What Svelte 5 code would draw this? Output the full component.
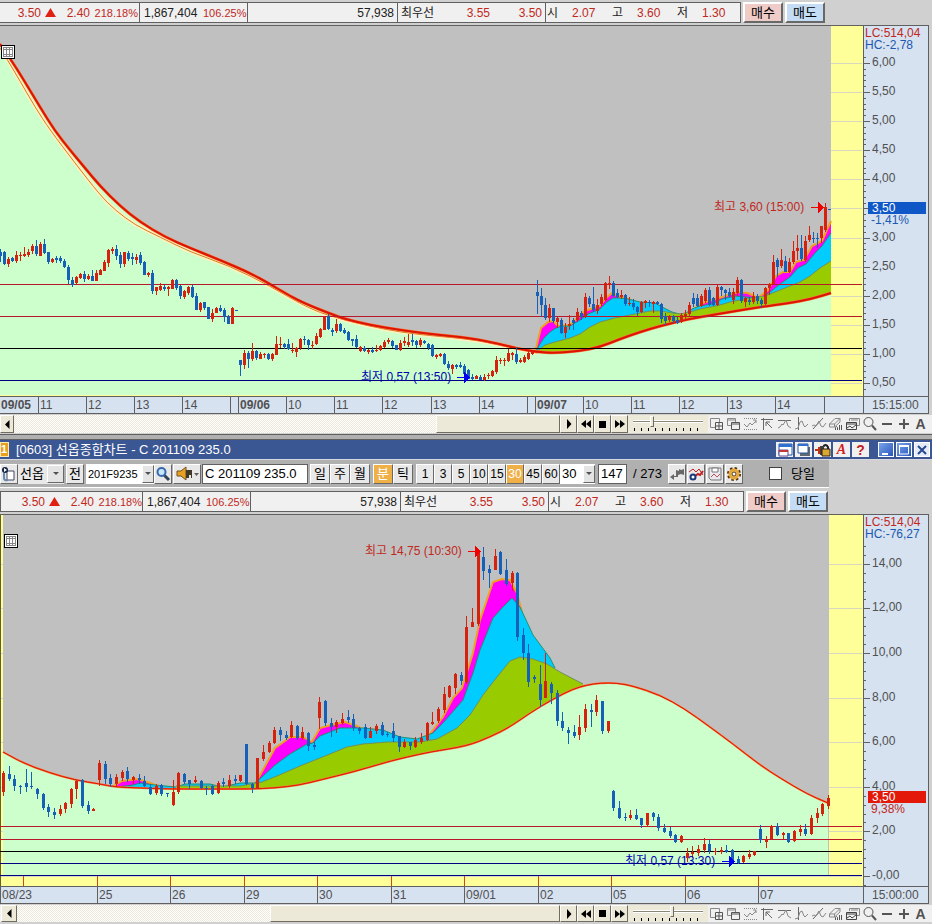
<script>
  // candle = [up, high, body top, body bottom, low], all in plot pixels
  const upperCandles = [
    [0,249,252,256,262],[0,251,252,264,265],[1,257,259,264,267],[0,257,258,261,262],[1,251,255,261,263],
    [1,252,255,256,261],[1,247,254,256,257],[1,249,252,255,257],[1,244,246,251,254],[0,240,246,254,256],
    [1,242,244,256,256],[0,239,244,253,254],[0,252,252,262,264],[1,258,259,262,263],[0,256,258,260,263],
    [0,256,258,261,263],[0,259,261,267,268],[0,265,267,280,284],[0,277,280,285,287],[1,276,277,283,284],
    [1,273,274,278,279],[0,271,274,279,282],[1,274,276,279,280],[0,270,276,281,281],[1,270,273,281,281],
    [1,269,270,275,275],[1,260,262,271,271],[1,249,250,263,267],[1,247,249,251,254],[0,245,249,256,260],
    [0,252,255,264,268],[1,252,252,264,267],[0,251,253,259,261],[0,253,257,259,265],[1,254,257,260,264],
    [0,252,255,263,265],[0,261,262,275,275],[1,272,273,275,277],[0,270,273,291,294],[1,287,287,291,295],
    [1,283,286,290,291],[0,285,287,289,291],[1,286,287,289,296],[1,279,280,289,289],[0,279,280,288,290],
    [0,285,286,296,299],[1,290,291,297,299],[1,286,287,293,295],[0,285,287,297,298],[0,293,296,310,310],
    [1,302,303,310,312],[0,302,302,308,310],[0,307,307,319,319],[1,309,313,319,322],[1,307,308,313,313],
    [0,305,308,311,312],[0,308,310,317,322],[0,315,316,324,324],[1,307,308,324,324],[0,310,310,311,311],
    [0,360,360,365,376],[1,350,353,365,369],[0,351,353,359,368],[1,343,351,359,361],[0,350,351,358,360],
    [1,352,354,359,359],[1,353,354,355,358],[0,353,354,359,360],[1,353,354,359,361],[1,336,344,355,355],
    [1,337,344,345,348],[0,343,344,347,349],[0,339,344,349,350],[1,343,350,351,353],[1,347,348,352,357],
    [1,338,339,348,350],[0,336,339,340,345],[0,339,340,345,350],[1,341,345,346,349],[1,333,336,344,345],
    [1,328,329,337,338],[1,316,317,330,330],[0,314,316,329,330],[0,328,330,332,336],[1,319,324,331,333],
    [0,323,324,331,332],[0,328,330,333,334],[0,331,332,340,341],[0,339,339,341,346],[0,335,339,347,348],
    [1,346,347,351,352],[0,346,348,351,352],[1,349,350,352,354],[0,347,350,352,353],[1,345,350,351,352],
    [1,345,346,350,351],[1,340,342,347,348],[1,338,340,342,344],[0,340,341,346,348],[0,345,345,350,350],
    [1,340,343,350,351],[1,337,341,343,346],[1,334,342,345,347],[0,334,340,342,346],[0,340,341,345,348],
    [1,338,340,345,347],[0,340,341,343,344],[0,343,344,348,350],[0,344,345,356,357],[1,354,355,357,359],
    [1,353,354,356,357],[0,353,354,364,365],[0,361,364,368,370],[1,364,365,369,374],[0,364,365,367,369],
    [0,362,365,367,368],[0,364,366,374,375],[0,369,370,379,379],[0,374,377,379,380],[1,375,376,379,379],
    [0,375,377,380,380],[1,374,377,380,381],[1,373,375,376,379],[1,370,371,376,377],[1,356,360,372,374],
    [1,358,360,361,364],[1,358,360,361,366],[1,349,353,361,362],[1,352,353,355,360],[0,347,354,362,364],
    [1,358,360,362,363],[1,355,357,362,363],[1,350,353,359,360],[1,350,352,354,355],[0,280,292,296,314],
    [0,288,296,305,317],[0,298,305,318,320],[1,304,308,318,322],[0,308,308,321,323],[1,317,318,322,328],
    [0,318,320,333,334],[1,323,327,333,338],[1,315,324,326,330],[0,318,320,323,330],[1,308,312,320,322],
    [0,311,313,317,320],[1,293,297,316,318],[0,296,298,304,307],[0,287,304,310,312],[1,299,305,311,314],
    [1,294,297,304,306],[1,282,283,300,301],[1,276,283,285,289],[0,281,283,296,297],[0,289,293,297,298],
    [1,290,295,297,299],[0,294,295,304,306],[1,297,303,304,306],[0,299,303,307,310],[0,306,307,312,316],
    [1,301,302,312,313],[1,300,301,303,308],[0,300,302,303,307],[1,301,302,304,313],[0,301,302,304,305],
    [0,303,304,319,323],[0,313,316,321,325],[1,315,317,320,322],[0,315,316,321,323],[0,317,320,323,324],
    [1,313,315,322,323],[1,310,314,317,319],[1,302,305,314,316],[0,293,298,304,307],[0,294,298,306,307],
    [1,294,296,306,307],[1,288,290,301,303],[0,287,290,305,306],[0,297,298,305,306],[1,285,287,305,306],
    [0,286,287,290,296],[0,289,290,293,300],[0,288,292,296,297],[1,288,292,300,304],[1,277,280,293,296],
    [0,279,280,301,303],[1,297,298,302,307],[0,297,300,302,305],[1,292,296,302,304],[0,294,296,301,304],
    [0,298,300,304,308],[1,287,288,304,305],[1,283,284,288,295],[1,255,262,284,285],[0,258,260,267,277],
    [1,249,260,266,268],[0,256,261,272,272],[1,258,262,272,273],[1,241,251,262,264],[1,235,248,251,260],
    [0,235,248,259,261],[1,236,241,260,262],[1,226,235,240,242],[0,232,238,239,243],[0,233,238,239,248],
    [1,226,226,238,243],[1,203,207,230,232],[0,209,209,210,210],
  ];
  const lowerCandles = [
    [1,771,773,792,796],[0,766,774,779,781],[0,775,779,786,791],[0,785,786,787,794],[0,769,783,787,792],
    [0,772,786,787,789],[0,788,789,794,799],[0,793,794,808,810],[0,804,807,812,817],[0,808,812,815,819],
    [1,805,809,814,816],[1,802,803,809,813],[1,788,789,804,808],[1,780,781,789,799],[0,779,780,806,808],
    [0,801,805,811,814],[1,808,809,811,811],[1,760,763,780,786],[0,761,764,779,784],[0,774,778,784,787],
    [1,774,777,784,787],[1,770,772,778,781],[0,767,771,779,782],[1,776,777,780,784],[0,774,778,780,784],
    [0,776,781,786,787],[0,784,787,794,795],[1,784,786,793,795],[0,784,785,794,796],[0,793,793,794,797],
    [1,780,792,805,806],[1,772,773,792,794],[0,773,774,782,784],[0,780,780,784,789],[1,776,780,782,783],
    [0,780,781,788,789],[0,786,788,789,795],[0,785,786,794,795],[1,781,783,793,794],[0,778,782,784,787],
    [1,775,780,786,788],[0,775,779,781,784],[1,775,775,781,782],[0,744,744,784,785],[0,783,784,788,793],
    [1,758,758,788,789],[1,745,752,759,761],[1,741,743,752,753],[1,727,730,743,744],[0,727,730,735,741],
    [0,731,735,738,740],[1,721,725,737,738],[0,725,726,738,740],[1,727,732,738,740],[0,732,733,746,751],
    [0,742,745,747,750],[1,697,702,718,729],[0,700,701,723,726],[0,718,723,727,737],[1,720,722,727,733],
    [1,713,719,723,725],[0,710,717,720,723],[0,714,719,728,731],[0,727,728,731,734],[0,724,727,738,739],
    [1,727,731,738,738],[1,724,726,731,734],[0,722,725,735,736],[0,732,734,735,737],[0,723,731,738,742],
    [0,736,736,747,752],[1,739,742,747,748],[0,742,742,746,750],[1,737,740,747,748],[1,733,738,742,744],
    [1,722,723,740,741],[1,712,722,724,725],[1,707,709,721,723],[1,687,694,710,713],[1,685,686,697,698],
    [1,673,674,688,694],[0,672,675,681,685],[1,616,627,682,684],[1,608,622,627,627],[1,550,552,624,626],
    [0,547,557,571,580],[0,565,569,573,588],[1,549,556,570,570],[0,551,552,574,575],[0,559,570,584,586],
    [1,571,573,583,591],[0,572,573,637,641],[0,628,635,653,660],[0,644,653,682,687],[0,675,677,679,683],
    [0,665,684,700,707],[1,653,681,698,698],[0,682,684,693,704],[0,690,693,721,726],[0,712,721,728,731],
    [0,727,730,733,744],[0,725,732,736,738],[1,715,727,735,740],[1,704,709,728,732],[0,704,710,712,727],
    [1,695,700,712,716],[0,701,701,731,734],[1,721,721,731,733],[0,790,791,808,811],[0,801,808,818,819],
    [0,813,817,818,821],[1,810,815,818,820],[0,809,815,819,820],[0,818,818,825,828],[1,813,813,825,827],
    [0,812,813,817,821],[0,814,817,828,831],[0,824,828,832,833],[0,827,831,836,838],[0,834,835,842,843],
    [1,835,836,842,843],[1,848,853,858,862],[1,846,852,854,858],[1,845,849,853,856],[1,838,844,850,853],
    [0,840,844,851,854],[1,848,851,852,855],[1,847,850,852,854],[0,845,850,852,853],[0,849,850,861,863],
    [0,856,859,863,864],[1,855,856,862,863],[1,850,854,857,859],[1,851,851,855,856],[0,825,829,840,843],
    [1,836,840,842,848],[1,825,826,839,840],[0,823,826,835,836],[1,832,833,835,839],[0,833,833,842,843],
    [1,830,831,841,842],[1,825,829,832,836],[0,824,829,834,836],[1,815,818,834,835],[1,808,813,818,823],
    [1,803,804,814,816],[1,795,798,806,809],
  ];

  const range = (n) => Array.from({ length: n }, (_, i) => i);

  const panels = [
    {
      id: "upper",
      top: 26,
      height: 370,
      left: 0,
      floor: 395,
      candles: upperCandles,
      candleX: (i) => (i < 134 ? i * 4 : i * 4 + 1),
      slow: "0,44 10,58 25,82 40,107 55,131 70,150 85,168 100,186 120,206 140,222 165,237 190,248 220,260 250,273 270,284 290,296 306,304 331,314 345,319 370,325 400,330 430,334 470,338 500,344 515,348 537,352 555,353 580,351 600,347 620,339 640,332 660,326 685,320 700,317 730,312 760,307 790,303 811,299 831,293",
      slowWidth: 2,
      slowShadow: "0,48 7,59 20,81 35,107 50,130 75,163 100,195 115,210 135,225 160,237 190,252 230,266 270,286 306,307 335,318 400,333 470,339 500,345 537,353",
      magenta: "535,353 538,340 541,328 548,322 553,321 558,326 570,325 585,311 600,306 606,298 612,293 618,296 628,299 640,304 655,306 664,311 683,318 692,311 700,304 712,300 722,297 738,292 748,293 758,298 768,290 776,276 783,272 790,272 796,262 804,260 812,246 822,241 826,232 831,221",
      cyan: "535,353 540,344 544,338 550,332 556,328 562,326 570,326 580,320 588,314 600,309 607,302 613,298 620,298 628,299 640,302 655,303 664,308 672,312 683,315 692,309 700,306 712,304 722,299 735,296 745,297 762,298 770,292 780,284 790,277 798,268 806,264 815,253 822,246 831,233",
      olive: "535,353 545,345 555,342 570,338 580,334 590,327 600,322 615,318 630,315 650,311 662,311 672,313 680,314 690,312 700,309 720,305 730,302 745,299 765,296 775,292 790,286 800,282 810,276 820,268 831,261",
      cloudFrom: 535,
      plotTo: 831,
      lines: [[284, "#b8182c"], [316, "#b8182c"], [348, "#000"], [380, "#000080"]],
      lc: "LC:514,04",
      hc: "HC:-2,78",
      majors: ["0,50", "1,00", "1,50", "2,00", "2,50", "3,00", "", "4,00", "4,50", "5,00", "5,50", "6,00"].map((text, i) => ({ y: Math.round(383 - i * 29.1), text })),
      minorStep: 5.82,
      tag: { y: 208, text: "3,50", sub: "-1,41%", tone: "on-blue" },
      high: { x: 714, y: 207, text: "최고 3,60 (15:00)", tip: 822 },
      low: { x: 361, y: 377, text: "최저 0,57 (13:50)", tip: 468 },
      dayTicks: [],
      times: [
        [-1, "09/05", true], [38, "11"], [86, "12"], [134, "13"], [182, "14"], [230, ""], [238, "09/06", true],
        [286, "10"], [334, "11"], [382, "12"], [431, "13"], [479, "14"], [527, ""], [535, "09/07", true],
        [583, "10"], [631, "11"], [679, "12"], [727, "13"], [775, "14"], [824, ""],
      ],
      clock: "15:15:00",
      thumb: 77.3,
      zoom: 26,
    },
    {
      id: "lower",
      top: 515,
      height: 371,
      left: 3,
      floor: 876,
      candles: lowerCandles,
      candleX: (i) => Math.round(3 + i * 5.65),
      slow: "3,752 20,762 50,773 75,780 100,784 115,787 140,788 170,789 220,789 250,789 275,788 300,785 320,780 353,772 387,762 407,757 430,752 467,746 490,737 510,727 530,713 553,699 573,689 587,685 600,683 617,683 633,686 660,695 685,709 710,727 733,744 760,765 780,778 807,794 828,803",
      slowWidth: 1,
      slowShadow: "",
      magenta: "112,787 122,781 138,779 150,783 160,787 176,789 250,788 255,784 264,768 275,748 285,741 290,737 303,737 312,742 320,728 335,724 345,722 357,726 365,731 400,741 417,741 430,734 443,717 453,698 462,688 473,653 480,620 493,582 502,579 510,580 517,593 522,612",
      cyan: "118,787 133,785 140,783 155,785 176,787 185,784 210,784 222,787 240,783 255,783 262,777 275,765 290,754 307,744 313,743 320,736 340,728 363,728 383,730 400,737 417,739 433,733 443,723 463,700 473,673 480,650 493,618 502,608 512,598 520,607 533,635 550,658 555,668",
      olive: "176,786 200,786 240,786 262,782 277,776 300,766 320,758 347,747 363,744 387,742 420,742 437,739 457,728 470,715 483,695 497,677 510,661 520,657 533,659 547,664 560,672 583,684",
      cloudFrom: 112,
      plotTo: 829,
      lines: [[826, "#b8182c"], [839, "#b8182c"], [851, "#000"], [863, "#000080"], [875, "#000080"]],
      lc: "LC:514,04",
      hc: "HC:-76,27",
      majors: ["-0,00", "2,00", "4,00", "6,00", "8,00", "10,00", "12,00", "14,00"].map((text, i) => ({ y: Math.round(876 - i * 44.6), text })),
      minorStep: 8.92,
      tag: { y: 797, text: "3,50", sub: "9,38%", tone: "on-red" },
      high: { x: 365, y: 551, text: "최고 14,75 (10:30)", tip: 479 },
      low: { x: 625, y: 861, text: "최저 0,57 (13:30)", tip: 733 },
      dayTicks: [23, 97, 170, 244, 317, 391, 464, 538, 611, 685, 758],
      times: [
        [0, "08/23"], [97, "25"], [170, "26"], [244, "29"], [317, "30"], [391, "31"], [464, "09/01"],
        [538, "02"], [611, "05"], [685, "06"], [758, "07"],
      ],
      clock: "15:00:00",
      thumb: 46.6,
      zoom: 56,
    },
  ];

  const plotWidth = 863;
  const area = (points, p) => {
    const first = points.split(" ")[0].split(",")[0];
    const last = points.split(" ").at(-1).split(",")[0];
    return `${points} ${last},${p.floor} ${first},${p.floor}`;
  };
  // runs through the midpoints so that the slow average has no corners
  const smooth = (points) => {
    const pts = points.split(" ").map((s) => s.split(",").map(Number));
    let d = `M${pts[0]}`;
    for (let i = 1; i < pts.length - 1; i++) {
      const [x, y] = pts[i];
      const [nx, ny] = pts[i + 1];
      d += ` Q${x},${y} ${(x + nx) / 2},${(y + ny) / 2}`;
    }
    return `${d} L${pts.at(-1)}`;
  };

  const minutes = [1, 3, 5, 10, 15, 30, 45, 60];
  let unit = $state("분");
  let minute = $state(30);
</script>

{#snippet ticker()}
  <div class="ticker">
    <div class="quote">
      <div class="cell price">
        <span class="red">3.50</span>
        <svg width="11" height="9" viewBox="0 0 11 9"><path d="M5.5 0 11 9H0z" fill="#e02010" /></svg>
        <span class="red">2.40</span>
        <span class="red rate">218.18%</span>
      </div>
      <div class="cell volume"><span>1,867,404</span><span class="red rate">106.25%</span></div>
      <div class="cell amount">57,938</div>
      <div class="cell best"><span>최우선</span><span class="red">3.55</span><span class="red">3.50</span></div>
      <div class="cell ohl">
        <span>시</span><span class="red">2.07</span>
        <span>고</span><span class="red">3.60</span>
        <span>저</span><span class="red">1.30</span>
      </div>
    </div>
    <button class="trade buy">매수</button>
    <button class="trade sell">매도</button>
  </div>
{/snippet}

{#snippet chart(p)}
  <div class="chart">
    <div class="plot">
      <svg class="canvas" height={p.height} viewBox="0 {p.top} {plotWidth} {p.height}" preserveAspectRatio="none">
        <rect x="0" y={p.top} width={plotWidth} height={p.height} fill="#ffff99" />
        {#each p.majors as m}
          <rect x="0" y={m.y} width="862" height="1" fill="#d8d8c0" />
        {/each}
        <rect x={p.left} y={p.top} width={p.plotTo - p.left} height={p.floor - p.top} fill="#c0c0c0" />
        {#if p.left}
          <rect x="0" y={p.top} width="1" height={p.height} fill="#606030" />
        {/if}
        <polygon points={area(p.magenta, p)} fill="#ff00ff" />
        <polyline points={p.magenta} fill="none" stroke="#f0a020" stroke-width="2" />
        <polygon points={area(p.cyan, p)} fill="#00ccff" />
        <polyline points={p.cyan} fill="none" stroke="#209070" />
        <polygon points={area(p.olive, p)} fill="#99cc00" />
        <polyline points={p.olive} fill="none" stroke="#6f8f5f" />
        <path d="{smooth(p.slow)} V{p.floor} H{p.left} Z" fill="#ccffcc" />
        {#if p.slowShadow}
          <path d={smooth(p.slowShadow)} fill="none" stroke="#fff0c0" stroke-width="4" />
          <path d={smooth(p.slowShadow)} fill="none" stroke="#d08020" />
        {/if}
        <path d={smooth(p.slow)} fill="none" stroke="#f87838" stroke-width={p.slowWidth + 1} />
        <path d={smooth(p.slow)} fill="none" stroke="#dc1404" stroke-width={p.slowWidth} />
        <g shape-rendering="crispEdges">
          {#each p.lines as [y, color]}
            <rect x="0" {y} width="862" height="1" fill={color} />
          {/each}
          {#each p.dayTicks as x}
            <rect {x} y="876" width="1" height="10" fill="#c84820" />
          {/each}
          {#each p.candles as [up, hi, top, bottom, lo], i}
            {@const x = p.candleX(i)}
            <g fill={up ? "#d4220e" : "#1660b8"}>
              <rect {x} y={hi} width="1" height={lo - hi} />
              <rect x={x - 1} y={top} width="3" height={bottom - top || 1} />
            </g>
          {/each}
          {#each [[p.high, "#f00000"], [p.low, "#0000f0"]] as [m, color]}
            <rect x={m.tip - 11} y={m.y} width="8" height="1" fill={color} />
            <path d="M{m.tip - 4} {m.y - 5}l6 5.5l-6 5.5z" fill={color} />
          {/each}
        </g>
      </svg>
      <span class="mark red" style="left: {(p.high.x / plotWidth) * 100}%; top: {p.high.y - p.top - 8}px">{p.high.text}</span>
      <span class="mark navy" style="left: {(p.low.x / plotWidth) * 100}%; top: {p.low.y - p.top - 8}px">{p.low.text}</span>
      <button class="table-toggle" class:inset={p.left > 0} aria-label="표">
        <svg width="10" height="10" viewBox="0 0 10 10" shape-rendering="crispEdges">
          <path d="M0 .5h10M0 2.5h10M0 7.5h10M0 9.5h10M.5 0v10M3.5 0v10M6.5 0v10M9.5 0v10" stroke="#888" fill="none" />
        </svg>
      </button>
    </div>
    <div class="axis">
      <svg width="64" height={p.height} viewBox="0 {p.top} 64 {p.height}" shape-rendering="crispEdges">
        {#each range(64) as i}
          {@const y = Math.round(p.majors[0].y + p.minorStep - i * p.minorStep)}
          {#if y > p.top + 28 && y < p.top + p.height}
            <rect x="0" {y} width="2" height="1" fill="#606060" />
          {/if}
        {/each}
        {#each p.majors as m}
          <rect x="0" y={m.y} width="6" height="1" fill="#606060" />
        {/each}
      </svg>
      <div class="change"><span class="red">{p.lc}</span><span class="blue">{p.hc}</span></div>
      {#each p.majors as m}
        <span class="level" style="top: {m.y - p.top - 7}px">{m.text}</span>
      {/each}
      <div class="tag {p.tag.tone}" style="top: {p.tag.y - p.top - 6}px"><b>{p.tag.text}</b><span>{p.tag.sub}</span></div>
    </div>
  </div>
  <div class="timeline">
    <div class="times">
      {#each p.times as [x, text, strong]}
        <span class:strong style="left: {(x / plotWidth) * 100}%">{text}</span>
      {/each}
    </div>
    <div class="clock">{p.clock}</div>
  </div>
{/snippet}

{#snippet scroller(p)}
  <div class="scroller" class:inset={p.left > 0}>
    <button class="face step" aria-label="이전"><svg width="6" height="9" viewBox="0 0 6 9"><path d="M5.5 0v9L1 4.5z" /></svg></button>
    <div class="track"><div class="thumb" style="margin-left: {p.thumb}%"></div></div>
    <button class="face" aria-label="다음"><svg width="6" height="10" viewBox="0 0 6 10"><path d="M1 0v10l4.5-5z" /></svg></button>
    <button class="face" aria-label="되감기"><svg width="10" height="8" viewBox="0 0 10 8"><path d="M5 0v8L0 4zM10 0v8L5 4z" /></svg></button>
    <button class="face" aria-label="정지"><svg width="7" height="7" viewBox="0 0 7 7"><path d="M0 0h7v7H0z" /></svg></button>
    <button class="face" aria-label="빨리 감기"><svg width="10" height="8" viewBox="0 0 10 8"><path d="M0 0v8l5-4zM5 0v8l5-4z" /></svg></button>
    <label class="slider">
      <input type="range" min="0" max="100" value={p.zoom} aria-label="봉 간격" />
      <svg width="72" height="3" viewBox="0 0 72 3" shape-rendering="crispEdges">
        {#each range(10) as i}<rect x={2 + i * 7} y="0" width="1" height="3" />{/each}
      </svg>
    </label>
    <div class="tools">
      <button aria-label="추가"><svg viewBox="0 0 16 16"><path d="M6 11.5H1.5v-9h9V6" /><path d="M6.5 6.5h7v7h-7zM10 7v6M7 10h6" stroke="#555" /></svg></button>
      <button aria-label="겹치기"><svg viewBox="0 0 16 16"><path d="M5 9.500H1.500v-7h8V6M1 4h9" /><path d="M5.500 6.500h8v7h-8zM5 8h9" stroke="#555" /></svg></button>
      <button aria-label="영역"><svg viewBox="0 0 16 16"><path d="M1 2.5h13M1 13.5h13" stroke-dasharray="1 1" /><path d="M1 8l3 3 3-4 2 2 4-4M10 4h3v3" /></svg></button>
      <button aria-label="전환점"><svg viewBox="0 0 16 16"><path d="M3.5 2v12M1 3.5h12M6 6l6 6M6 6h4M6 6v4" stroke="#666" /></svg></button>
      <button aria-label="수평선"><svg viewBox="0 0 16 16"><path d="M1 4.500h13" stroke="#666" /><path d="M1 12l2-1 2-3 1 1 3-5 2 6 3 2" /></svg></button>
      <button aria-label="수직선"><svg viewBox="0 0 16 16"><path d="M4.500 1v13" stroke="#666" /><path d="M1 13l3-1 2-6 2-1 2 5 1 1 3-3" /></svg></button>
      <button aria-label="추세선"><svg viewBox="0 0 16 16"><path d="M2 13 12 2" stroke="#666" /><path d="M1 10l2-1 2 1 3-5 2 5 2 1 3-4" /></svg></button>
      <button aria-label="모두 지우기"><svg viewBox="0 0 16 16"><path d="M1.5 8 7 2.5h5L6.500 8zM1.500 8v3h5V8M6.500 11 12 6V2.500" /><path d="M7.500 14V11.500l1-1 1 1V14M11.500 9v5M13.500 9v5" stroke="#555" /></svg></button>
      <button aria-label="차트 복사"><svg viewBox="0 0 16 16"><path d="M4.5 5V2.5h10v7H12M6 4h7" /><path d="M1.500 6.500h10v7h-10zM1 8h10M2 12l3-2 2 2 4-3" stroke="#444" /></svg></button>
      <button aria-label="돋보기"><svg viewBox="0 0 16 16"><circle cx="6.5" cy="6" r="4.5" stroke="#555" /><path d="M10 9.5 14 14" stroke="#555" stroke-width="2" /></svg></button>
      <button aria-label="축소"><svg viewBox="0 0 16 16"><path d="M3 8h10" stroke="#555" stroke-width="2" /></svg></button>
      <button aria-label="확대"><svg viewBox="0 0 16 16"><path d="M3 8h10M8 3v10" stroke="#555" stroke-width="2" /></svg></button>
      <button class="letter">A</button>
    </div>
  </div>
{/snippet}

<section class="window">
  {@render ticker()}
  {@render chart(panels[0])}
  {@render scroller(panels[0])}
</section>

<header class="title">
  <span class="badge">1</span>
  <h1>[0603] 선옵종합차트 - C 201109 235.0</h1>
  <div class="window-tools">
    <button aria-label="창 설정"><svg viewBox="0 0 16 14"><path d="M2 1h13v11H2z" fill="#fff" stroke="#2858a0" /><path d="M2 1h13v3H2z" fill="#3070d0" /><path d="M2 7h9v6H2z" fill="#fff" stroke="#604898" /><path d="M2 7h9v2H2z" fill="#c03838" /></svg></button>
    <button aria-label="창 복사"><svg viewBox="0 0 16 14"><path d="M4 4h10v9H4z" fill="#606870" /><path d="M2 1h10v9H2z" fill="#fff" stroke="#2858a0" /><path d="M2 1h10v2H2z" fill="#3070d0" /></svg></button>
    <button aria-label="잠금"><svg viewBox="0 0 16 14"><path d="M0 7h6M4 4v7" stroke="#c03010" stroke-width="2" /><path d="M8 7V4q2.5-4 5 0v3" fill="none" stroke="#222" stroke-width="2" /><path d="M5 3h4v9H5z" fill="#404040" /><path d="M7 6h8v7H7z" fill="#d8a830" stroke="#302010" /></svg></button>
    <button class="font">A</button>
    <button class="help">?</button>
  </div>
  <div class="window-controls">
    <button aria-label="최소화"><svg viewBox="0 0 14 14"><path d="M3 11h6" stroke="#fff" stroke-width="2" /></svg></button>
    <button aria-label="최대화"><svg viewBox="0 0 14 14"><path d="M2.500 3h9v8h-9z" fill="none" stroke="#fff" /><path d="M2 3h10" stroke="#fff" stroke-width="2" /></svg></button>
    <button class="light" aria-label="닫기"><svg viewBox="0 0 14 14"><path d="m3 3 8 8M11 3l-8 8" stroke="#284890" stroke-width="2" /></svg></button>
  </div>
</header>

<div class="toolbar">
  <div class="controls">
    <button class="key icon" aria-label="화면"><svg viewBox="0 0 16 16"><path d="M6 5h7v9H6z" fill="#fff" stroke="#446" /><path d="M3 7v5q0 3 4 2" fill="none" stroke="#68a" stroke-width="2" /><circle cx="4" cy="4" r="3" fill="#124" /><path d="m3 2 3 2-3 2z" fill="#fff" /></svg></button>
    <div class="combo market">
      <select aria-label="시장"><option>선옵</option></select><i></i>
    </div>
    <button class="key prev">전</button>
    <div class="combo code">
      <select aria-label="종목코드"><option>201F9235</option></select><i></i>
    </div>
    <button class="key icon" aria-label="종목 검색"><svg viewBox="0 0 16 16"><path d="m9 9 5 5" stroke="#345" stroke-width="3" /><circle cx="6.5" cy="6" r="4" fill="#c8e8f8" stroke="#3868b0" stroke-width="2" /></svg></button>
    <button class="key sound" aria-label="소리"><svg viewBox="0 0 24 16"><path d="M2 5h4l5-4v13L6 10H2z" fill="#e8a020" stroke="#705020" /><path d="M11 4h6v8h-1V9h-2v3h-3z" fill="#403828" /><path d="M19 7h5l-2.500 3z" fill="#606060" /></svg></button>
    <input class="name" aria-label="종목명" value="C 201109 235.0" />
    <div class="keys">
      {#each ["일", "주", "월"] as name}
        <button class="key" class:on={unit === name} onclick={() => (unit = name)}>{name}</button>
      {/each}
    </div>
    <div class="keys">
      {#each ["분", "틱"] as name}
        <button class="key" class:on={unit === name} onclick={() => (unit = name)}>{name}</button>
      {/each}
    </div>
    <div class="keys minutes">
      {#each minutes as m}
        <button class="key" class:on={minute === m} onclick={() => (minute = m)}>{m}</button>
      {/each}
      <div class="combo minute">
        <select aria-label="분"><option>30</option></select><i></i>
      </div>
    </div>
    <label class="count"><input aria-label="봉 개수" value="147" /> <span>/ 273</span></label>
    <div class="keys icons">
      <button class="key icon" aria-label="되돌리기"><svg viewBox="0 0 16 16"><path d="M1 11l4-3v2h2V4l3 1V3l2 1 3-1v6l-3-1-3 1v2H5v3z" fill="#686868" /></svg></button>
      <button class="key icon" aria-label="지표 설정"><svg viewBox="0 0 16 16"><path d="m1 6 4-3 3 3 3-3 4 6" fill="none" stroke="#c02020" /><path d="m7 10 3-2 2 1 3-4" fill="none" stroke="#c02020" stroke-width="2" /><circle cx="5" cy="11" r="2.5" fill="#fff" stroke="#183878" stroke-width="2" /></svg></button>
      <button class="key icon" aria-label="저장"><svg viewBox="0 0 16 16"><path d="M2 2h12v12H4l-2-2z" fill="#e8e8f0" stroke="#777" /><path d="M5 2h6v4H5z" fill="#fff" stroke="#777" /><path d="m4 11 3-3 3 3 3-3" fill="none" stroke="#c05050" /></svg></button>
      <button class="key icon" aria-label="환경 설정"><svg viewBox="0 0 16 16"><circle cx="8" cy="8" r="5.5" fill="none" stroke="#503008" stroke-width="3" stroke-dasharray="2.3 2" /><circle cx="8" cy="8" r="4" fill="#fff" stroke="#e8a838" stroke-width="3" /><circle cx="8" cy="8" r="2" fill="#fff" stroke="#503008" /></svg></button>
    </div>
    <label class="today"><input type="checkbox" /><span>당일</span></label>
  </div>
</div>

<section class="window second">
  {@render ticker()}
  {@render chart(panels[1])}
  {@render scroller(panels[1])}
</section>

<style>
  :global(body) {
    margin: 0;
    background: #d0d0d0;
    font-family: "Liberation Sans", "Noto Sans CJK KR", sans-serif;
    font-size: 12px;
    line-height: 16px;
    color: #202020;
  }
  button,
  input,
  select {
    font: inherit;
    color: inherit;
    margin: 0;
    padding: 0;
    border: 0;
    border-radius: 0;
    box-sizing: border-box;
  }
  button {
    display: flex;
    align-items: center;
    justify-content: center;
    white-space: nowrap;
  }
  button svg {
    flex: none;
  }
  span {
    white-space: nowrap;
  }
  .red {
    color: #c0281c;
  }
  .blue {
    color: #1c58b0;
  }
  .navy {
    color: #0000b0;
  }

  .window {
    padding: 2px 3px 2px 0;
    overflow: hidden;
  }
  .window.second {
    padding-top: 3px;
  }

  /* quote line */
  .ticker {
    display: flex;
    gap: 2px;
    height: 21px;
    margin-bottom: 2px;
  }
  .quote {
    display: flex;
    border: 1px solid #606060;
    border-left: 0;
    background: #f0f0f0;
  }
  .second .quote {
    border-left: 1px solid #606060;
  }
  .cell {
    display: grid;
    align-items: center;
    box-sizing: border-box;
    border-right: 1px solid #606060;
  }
  .price {
    width: 140px;
    grid-template-columns: 41px 15px 34px 48px;
    justify-items: end;
  }
  .second .price {
    width: 142px;
    padding-left: 3px;
  }
  .rate {
    font-size: 11px;
  }
  .volume {
    width: 108px;
    grid-template-columns: 59px 44px;
    padding-left: 4px;
  }
  .amount {
    width: 150px;
    justify-items: end;
    padding-right: 3px;
  }
  .best {
    width: 148px;
    grid-template-columns: 40px 49px 52px;
    padding-left: 3px;
  }
  .best .red {
    justify-self: end;
  }
  .ohl {
    width: 194px;
    grid-template-columns: 25px 40px 25px 40px 25px 36px;
    padding-left: 1px;
    border-right: 0;
  }
  .trade {
    width: 40px;
    border: 2px solid #fff;
    border-right-color: #686868;
    border-bottom-color: #686868;
    color: #000;
    font-size: 13px;
  }
  .buy {
    background: #f0ccc8;
  }
  .sell {
    background: #c4dcf4;
  }

  /* chart */
  .chart,
  .timeline {
    display: flex;
    border-top: 1px solid #606060;
  }
  .plot {
    position: relative;
    flex: 1;
    min-width: 0;
  }
  .canvas {
    display: block;
    width: 100%;
  }
  .mark {
    position: absolute;
  }
  .table-toggle {
    position: absolute;
    left: 1px;
    top: 19px;
    width: 14px;
    height: 14px;
    border: 1px solid #000;
    background: #fff;
  }
  .table-toggle.inset {
    left: 4px;
  }
  .axis {
    position: relative;
    width: 64px;
    border: solid #606060;
    border-width: 0 1px;
    background: #d6e2f0;
    color: #505050;
  }
  .axis svg {
    display: block;
  }
  .change {
    position: absolute;
    left: 1px;
    top: 1px;
    display: flex;
    flex-direction: column;
    line-height: 12px;
  }
  .level {
    position: absolute;
    left: 8px;
    line-height: 12px;
  }
  .tag {
    position: absolute;
    left: 4px;
    right: 2px;
    display: flex;
    flex-direction: column;
    line-height: 12px;
  }
  .tag b {
    padding-left: 4px;
    font-weight: normal;
    color: #fff;
  }
  .tag span {
    padding-left: 3px;
    align-self: start;
  }
  .on-blue b {
    background: #1058c8;
  }
  .on-blue span {
    color: #1c58b0;
  }
  .on-red b {
    background: #e41808;
  }
  .on-red span {
    color: #c0281c;
  }
  .timeline {
    height: 16px;
    border-bottom: 1px solid #606060;
    background: #d6e2f0;
    color: #505050;
    margin-bottom: 1px;
  }
  .times {
    position: relative;
    flex: 1;
  }
  .times span {
    position: absolute;
    top: 0;
    height: 16px;
    padding-left: 1px;
    border-left: 1px solid #606060;
  }
  .times .strong {
    font-weight: bold;
  }
  .clock {
    width: 56px;
    padding-left: 8px;
    border: solid #606060;
    border-width: 0 1px;
  }

  /* scroll line */
  .scroller {
    display: flex;
    height: 18px;
    margin-right: -3px;
    background: #f0f0f0;
  }
  .second .scroller {
    height: 17px;
  }
  .scroller.inset {
    padding-left: 1px;
  }
  .face,
  .thumb {
    box-sizing: border-box;
    background: #ece9d8;
    border: 1px solid #fff;
    border-right-color: #706c60;
    border-bottom-color: #706c60;
  }
  .face {
    width: 17px;
  }
  .step {
    width: 14px;
  }
  .inset .step {
    width: 16px;
  }
  .track {
    flex: 1;
    display: flex;
    background: repeating-conic-gradient(#fff 0 25%, #ece9d8 0 50%) 0 0 / 2px 2px;
  }
  .thumb {
    flex: 1;
  }
  .slider {
    display: flex;
    flex-direction: column;
    align-items: center;
    width: 80px;
    background: #ece9d8;
  }
  .slider input {
    appearance: none;
    width: 70px;
    height: 13px;
    background: linear-gradient(#8a8678, #8a8678) center / 100% 1px no-repeat, linear-gradient(#fff, #fff) center / 100% 3px no-repeat;
  }
  .slider input::-webkit-slider-thumb {
    appearance: none;
    width: 4px;
    height: 11px;
    background: #ece9d8;
    border: 1px solid #fff;
    border-right-color: #706c60;
    border-bottom-color: #706c60;
  }
  .tools {
    display: flex;
    width: 224px;
  }
  .tools button {
    width: 17px;
    background: none;
  }
  .tools svg {
    width: 16px;
    height: 16px;
    fill: none;
    stroke: #888;
  }
  .tools .letter {
    font-size: 14px;
    font-weight: bold;
    color: #505050;
  }

  /* title */
  .title {
    display: flex;
    align-items: center;
    height: 19px;
    padding-right: 2px;
    border-top: 1px solid #606060;
    border-bottom: 1px solid #d8d8e0;
    box-shadow: 0 -4px 0 #b0b0b0, 0 -5px 0 #606060;
    margin-top: 4px;
    background: #3a5693;
    color: #fff;
  }
  .badge {
    width: 7px;
    height: 13px;
    margin-right: 7px;
    border: 1px solid #ffe8b0;
    background: #e8a020;
    font-size: 11px;
    font-weight: bold;
    line-height: 13px;
  }
  h1 {
    flex: 1;
    margin: 0;
    font-size: 13px;
    font-weight: normal;
    line-height: 18px;
  }
  .window-tools,
  .window-controls {
    display: flex;
    gap: 2px;
  }
  .window-tools {
    margin-right: 9px;
  }
  .title button {
    width: 17px;
    height: 15px;
    background: #f0f0f0;
  }
  .title .window-controls button {
    width: 16px;
    background: linear-gradient(135deg, #7aa4e8, #2858c0);
    border: 1px solid #fff;
  }
  .title .window-controls button.light {
    background: #e4ecf8;
  }
  .title svg {
    width: 16px;
    height: 14px;
  }
  .window-controls svg {
    width: 14px;
  }
  .title .font {
    font: italic bold 14px "Liberation Serif", serif;
    color: #d02020;
  }
  .title .help {
    font-size: 14px;
    font-weight: bold;
    color: #c02020;
  }

  /* toolbar */
  .toolbar {
    display: flex;
    color: #000;
  }
  .controls {
    display: flex;
    align-items: center;
    box-sizing: border-box;
    width: 829px;
    height: 28px;
    border-bottom: 1px solid #fff;
    background: #b0b0b0;
    font-size: 13px;
  }
  .key {
    width: 20px;
    height: 20px;
    border: 1px solid #fff;
    border-right-color: #686868;
    border-bottom-color: #686868;
    background: #e8e8e8;
  }
  .key.icon {
    width: 18px;
  }
  .key.icon svg {
    width: 16px;
    height: 16px;
  }
  .key.prev {
    width: 18px;
  }
  .key.on {
    background: #f0b048;
    color: #fff;
  }
  .key.sound {
    width: 28px;
    margin: 0 1px;
  }
  .sound svg {
    width: 24px;
    height: 16px;
  }
  .combo {
    display: flex;
    align-items: center;
    height: 20px;
    background: #fff;
  }
  .combo select {
    flex: 1;
    min-width: 0;
    height: 20px;
    padding-left: 2px;
    appearance: none;
    background: none;
  }
  .combo i {
    display: flex;
    align-items: center;
    justify-content: center;
    width: 12px;
    height: 18px;
    background: #e4e4e4;
    border: 1px solid #fff;
    border-right-color: #686868;
    border-bottom-color: #686868;
    box-sizing: border-box;
    pointer-events: none;
  }
  .combo i::after {
    content: "";
    border: 3px solid transparent;
    border-top-color: #505050;
    border-bottom: 0;
  }
  .market {
    width: 46px;
    margin-right: 2px;
    background: #e8e8e8;
  }
  .market i {
    width: 17px;
  }
  .code {
    width: 68px;
    margin-left: 2px;
  }
  .code select {
    font-size: 11px;
  }
  .name {
    width: 106px;
    height: 20px;
    padding-left: 2px;
    margin-right: 2px;
    border: 1px solid #606060;
    background: #fff;
  }
  .keys {
    display: flex;
    margin-right: 3px;
  }
  .minutes .key {
    width: 18px;
    font-size: 12px;
  }
  .minute {
    width: 35px;
  }
  .count {
    display: flex;
    align-items: center;
    gap: 6px;
  }
  .count input {
    width: 29px;
    height: 20px;
    padding-left: 2px;
    border: 1px solid #606060;
    background: #fff;
  }
  .icons {
    gap: 1px;
    margin: 0 0 0 6px;
  }
  .today {
    display: flex;
    align-items: center;
    gap: 9px;
    margin-left: 26px;
  }
  .today input {
    appearance: none;
    width: 13px;
    height: 13px;
    border: 1px solid #404040;
    background: #fff;
  }
</style>
